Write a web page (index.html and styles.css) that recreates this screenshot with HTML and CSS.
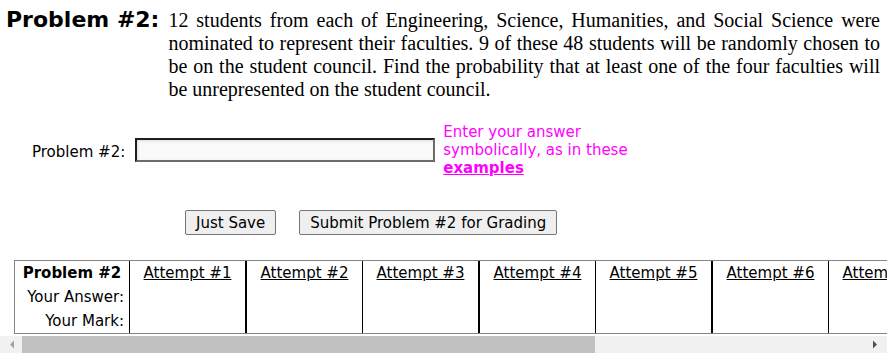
FILE: index.html
```html
<!DOCTYPE html>
<html lang="en">

<head>
    <meta charset="UTF-8">
    <meta name="viewport" content="width=device-width, initial-scale=1.0">
    <title>Problem #2</title>
    <link rel="stylesheet" href="styles.css">
</head>

<body>
    <div class="problem">
        <h1 class="problem__title">Problem #2:</h1>
        <p class="problem__text">12 students from each of Engineering, Science, Humanities, and Social Science were nominated to represent their faculties. 9 of these 48 students will be randomly chosen to be on the student council. Find the probability that at least one of the four faculties will be unrepresented on the student council.</p>
    </div>

    <form class="answer">
        <div class="answer__row">
            <label class="answer__label" for="ans2">Problem #2:</label>
            <input class="answer__input" type="text" id="ans2">
            <div class="answer__hint">Enter your answer symbolically, as in these <a href="#">examples</a></div>
        </div>
        <div class="answer__buttons">
            <button type="button" class="btn">Just Save</button>
            <button type="button" class="btn">Submit Problem #2 for Grading</button>
        </div>
    </form>

    <div class="attempts">
        <div class="attempts__scroll">
            <table class="attempts__table">
                <tr>
                    <th class="attempts__head">Problem #2</th>
                    <td><a href="#">Attempt #1</a></td>
                    <td><a href="#">Attempt #2</a></td>
                    <td><a href="#">Attempt #3</a></td>
                    <td><a href="#">Attempt #4</a></td>
                    <td><a href="#">Attempt #5</a></td>
                    <td><a href="#">Attempt #6</a></td>
                    <td><a href="#">Attempt #7</a></td>
                    <td><a href="#">Attempt #8</a></td>
                    <td><a href="#">Attempt #9</a></td>
                    <td><a href="#">Attempt #10</a></td>
                </tr>
                <tr>
                    <th class="attempts__label">Your Answer:</th>
                    <td></td><td></td><td></td><td></td><td></td>
                    <td></td><td></td><td></td><td></td><td></td>
                </tr>
                <tr>
                    <th class="attempts__label">Your Mark:</th>
                    <td></td><td></td><td></td><td></td><td></td>
                    <td></td><td></td><td></td><td></td><td></td>
                </tr>
            </table>
        </div>
        <div class="scrollbar">
            <div class="scrollbar__btn">
                <svg width="17" height="17" viewBox="0 0 17 17"><polygon points="14,4.5 10,8.5 14,12.5" fill="#a3a3a3"/></svg>
            </div>
            <div class="scrollbar__track">
                <div class="scrollbar__thumb"></div>
            </div>
            <div class="scrollbar__btn">
                <svg width="17" height="17" viewBox="0 0 17 17"><polygon points="3,4.5 7,8.5 3,12.5" fill="#505050"/></svg>
            </div>
        </div>
    </div>
</body>

</html>
```

FILE: styles.css
```css
*,
*::after,
*::before {
    box-sizing: border-box;
}

html,
body {
    height: 100%;
}

body {
    margin: 0;
    background: #fff;
    color: #000;
    font-family: "DejaVu Sans", Verdana, sans-serif;
    font-size: 15px;
}

/* problem statement */

.problem {
    display: flex;
    align-items: baseline;
    padding: 7px 14px 0 6px;
}

.problem__title {
    margin: 0 9px 0 0;
    font-size: 22px;
    font-weight: bold;
    white-space: nowrap;
}

.problem__text {
    flex: 1;
    margin: 0;
    font-family: "Liberation Serif", "Times New Roman", serif;
    font-size: 20px;
    line-height: 23px;
    text-align: justify;
}

/* answer box */

.answer {
    margin: 22px 0 0;
}

.answer__row {
    display: flex;
    align-items: center;
    padding-left: 32px;
}

.answer__label {
    margin-right: 10px;
    padding-top: 3px;
}

.answer__input {
    width: 300px;
    height: 24px;
    margin-top: -1px;
    border: 2px solid;
    border-color: #1e1e1e #6b6b6b #6b6b6b #1e1e1e;
    background: #fafafa;
    box-shadow: inset 1px 1px 3px rgba(0, 0, 0, .12);
    font: inherit;
}

.answer__hint {
    width: 190px;
    margin-left: 8px;
    color: #ff00ff;
    line-height: 18px;
}

.answer__hint a {
    color: #ff00ff;
    font-weight: bold;
}

.answer__buttons {
    display: flex;
    gap: 23px;
    margin-top: 33px;
    padding-left: 185px;
}

.btn {
    height: 25px;
    padding: 0 10px;
    border: 1px solid #767676;
    border-radius: 2px;
    background: #efefef;
    color: #000;
    font: inherit;
}

/* attempts table */

.attempts {
    margin: 25px 7px 0 0;
}

.attempts__scroll {
    overflow: hidden;
}

.attempts__table {
    width: max-content;
    margin: 0 14px 2px;
    border: 1px solid #858585;
    border-spacing: 0;
    line-height: 18px;
}

.attempts__table th,
.attempts__table td {
    box-sizing: content-box;
    padding: 3px 5px;
    white-space: nowrap;
}

.attempts__table td {
    width: 105px;
    border-left: 1px solid #000;
    text-align: center;
}

.attempts__table td:nth-child(odd) {
    border-left-width: 2px;
}

.attempts__head {
    width: 104px;
    text-align: center;
}

.attempts__label {
    font-weight: normal;
    text-align: right;
}

.attempts__table a {
    color: #000;
}

/* horizontal scrollbar under the table */

.scrollbar {
    display: flex;
    height: 17px;
    background: #f1f1f1;
}

.scrollbar__btn {
    width: 17px;
    height: 17px;
}

.scrollbar__btn svg {
    display: block;
}

.scrollbar__track {
    flex: 1;
    padding-left: 5px;
}

.scrollbar__thumb {
    width: 573px;
    height: 100%;
    background: #c1c1c1;
}
```
